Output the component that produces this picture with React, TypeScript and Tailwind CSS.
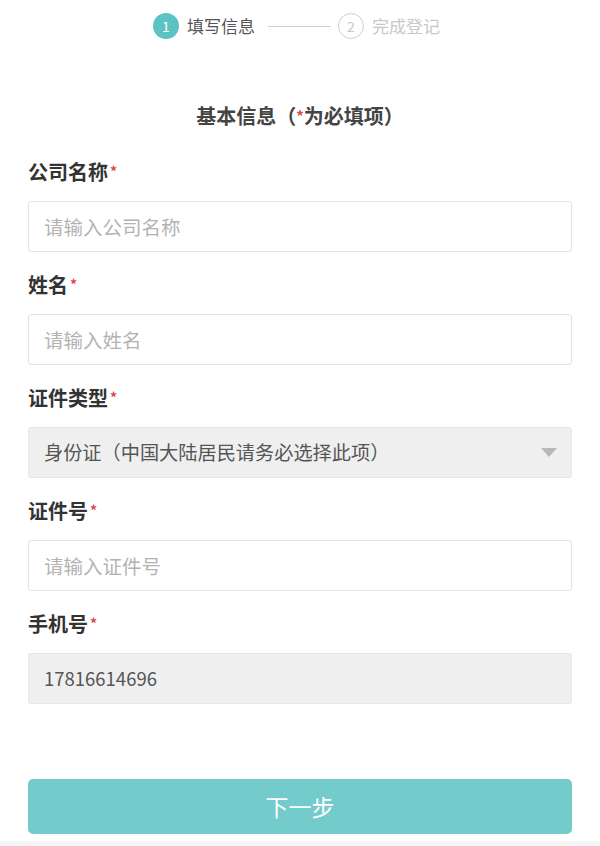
import React from "react";

const font = { fontFamily: '"Noto Sans CJK SC", "Noto Sans", sans-serif' };

function Label({ text }: { text: string }) {
	return (
		<div className="h-[28px] mb-[15px] flex items-center text-[20px] font-bold text-[#333] leading-none">
			{text}
			<span className="text-[#e04848] text-[14px] ml-[2px] -mt-[2px]">*</span>
		</div>
	);
}

function TextField({ placeholder }: { placeholder: string }) {
	return (
		<input
			className="w-full h-[51px] rounded-[3px] border border-[#e3e3e3] bg-white px-[15px] text-[19.5px] text-[#555] placeholder:text-[#b3b3b3] outline-none"
			placeholder={placeholder}
		/>
	);
}

export default function App() {
	return (
		<div className="w-[600px] h-[846px] bg-[#f4f5f5] flex flex-col" style={font}>
			<div className="h-[841px] bg-white px-[28px]">
				{/* Steps */}
				<div className="h-[52px] flex items-center justify-center pr-[7px]">
					<div className="w-[26px] h-[26px] rounded-full bg-[#5cc2c2] text-white text-[14px] flex items-center justify-center">1</div>
					<span className="ml-[8px] text-[17px] text-[#555]">填写信息</span>
					<div className="w-[63px] h-px bg-[#cfcfcf] ml-[13px] mr-[7px]" />
					<div className="w-[26px] h-[26px] rounded-full border border-[#cfcfcf] text-[#c8c8c8] text-[14px] flex items-center justify-center">2</div>
					<span className="ml-[8px] text-[17px] text-[#c8c8c8]">完成登记</span>
				</div>

				{/* Title */}
				<div className="mt-[50px] h-[28px] flex items-center justify-center text-[20px] font-bold text-[#444]">
					基本信息（<span className="text-[#e04848] text-[15px]">*</span>为必填项）
				</div>

				<div className="mt-[28px] flex flex-col gap-[19px]">
					<div>
						<Label text="公司名称" />
						<TextField placeholder="请输入公司名称" />
					</div>
					<div>
						<Label text="姓名" />
						<TextField placeholder="请输入姓名" />
					</div>
					<div>
						<Label text="证件类型" />
						<div className="h-[51px] rounded-[3px] border border-[#e6e6e6] bg-[#efefef] px-[15px] flex items-center justify-between">
							<span className="text-[19.2px] text-[#555]">身份证（中国大陆居民请务必选择此项）</span>
							<svg width="16" height="9" viewBox="0 0 16 9" className="mr-[-1px]">
								<path d="M0 0 H16 L8 9 Z" fill="#b8b8b8" />
							</svg>
						</div>
					</div>
					<div>
						<Label text="证件号" />
						<TextField placeholder="请输入证件号" />
					</div>
					<div>
						<Label text="手机号" />
						<div className="h-[51px] rounded-[3px] border border-[#e6e6e6] bg-[#efefef] px-[15px] flex items-center text-[18.5px] text-[#555]">
							17816614696
						</div>
					</div>
				</div>

				<button className="mt-[75px] w-full h-[55px] rounded-[5px] bg-[#74cbcb] text-white text-[23px]">
					下一步
				</button>
			</div>
		</div>
	);
}
